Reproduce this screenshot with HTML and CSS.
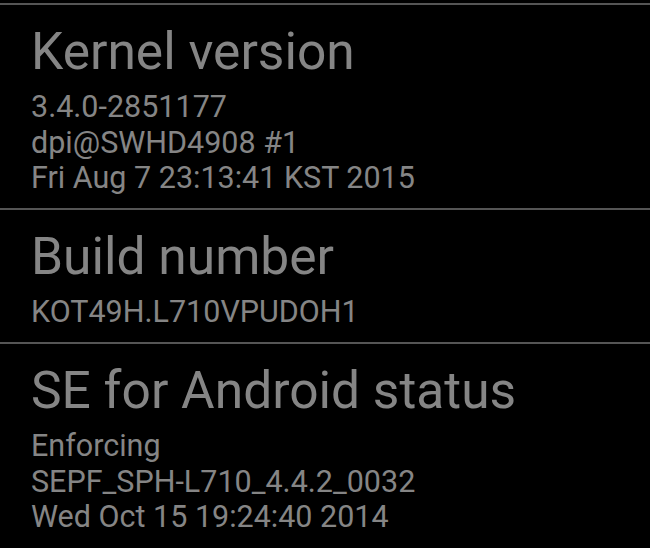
FILE: index.html
```html
<!DOCTYPE html>
<html lang="en">
<head>
<meta charset="utf-8">
<title>About device</title>
<link rel="stylesheet" href="styles.css">
</head>
<body>
<div class="list">
  <div class="item">
    <div class="title">Kernel version</div>
    <div class="summary">3.4.0-2851177</div>
    <div class="summary">dpi@SWHD4908 #1</div>
    <div class="summary">Fri Aug 7 23:13:41 KST 2015</div>
  </div>
  <div class="item">
    <div class="title">Build number</div>
    <div class="summary">KOT49H.L710VPUDOH1</div>
  </div>
  <div class="item">
    <div class="title">SE for Android status</div>
    <div class="summary">Enforcing</div>
    <div class="summary">SEPF_SPH-L710_4.4.2_0032</div>
    <div class="summary">Wed Oct 15 19:24:40 2014</div>
  </div>
</div>
</body>
</html>
```
FILE: styles.css
```css
html, body {
  margin: 0;
  padding: 0;
  background: #000;
}
body {
  width: 650px;
  height: 548px;
  overflow: hidden;
  font-family: Roboto, "Noto Sans", "Liberation Sans", sans-serif;
  color: #858585;
}
.list {
  padding-top: 3px;
}
.item {
  border-top: 2px solid #555555;
  padding: 17px 0 12.5px 31px;
}
.title {
  font-size: 51.5px;
  line-height: 60px;
  margin-bottom: 7px;
  white-space: nowrap;
}
.summary {
  font-size: 30.5px;
  line-height: 35.5px;
  white-space: nowrap;
}
```
